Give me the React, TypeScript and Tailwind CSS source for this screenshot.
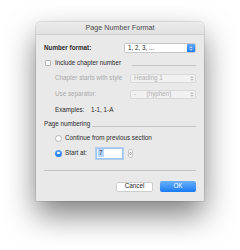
import React from 'react';

function Chevrons({ className }: { className?: string }) {
  return (
    <svg viewBox="0 0 6 10" className={className} fill="none" stroke="currentColor" strokeWidth="1.2" strokeLinecap="round" strokeLinejoin="round">
      <path d="M1.5 4 L3 2.3 L4.5 4" />
      <path d="M1.5 6 L3 7.7 L4.5 6" />
    </svg>
  );
}

function DisabledPopup({ label }: { label: React.ReactNode }) {
  return (
    <div className="ml-auto w-[66px] h-[9px] rounded-[2px] bg-[#f1f1f1] border border-[#d9d9d9] flex items-center pl-[3px] pr-[1px] text-[#b0b0b0]">
      <span className="flex-1 whitespace-pre">{label}</span>
      <Chevrons className="w-[4px] h-[7px] text-[#a0a0a0]" />
    </div>
  );
}

export default function App() {
  return (
    <div className="w-[240px] h-[250px] bg-white overflow-hidden pt-[22px] pl-[36px] [font-family:'Liberation_Sans',Arial,sans-serif] text-[6.3px] leading-none text-[#2a2a2a]">
      <div className="w-[168px] h-[179px] bg-[#e9e9e9] rounded-t-[4px] shadow-[0_14px_30px_rgba(0,0,0,0.5),0_0_0_0.5px_rgba(0,0,0,0.18)] flex flex-col">
        {/* title bar */}
        <div className="h-[13px] shrink-0 rounded-t-[4px] bg-gradient-to-b from-[#ececec] to-[#e1e1e1] border-b border-[#cfcfcf] flex items-center justify-center text-[7.2px] text-[#4a4a4a]">
          Page Number Format
        </div>

        <div className="flex flex-col px-[8px]">
          {/* number format */}
          <div className="mt-[8px] h-[10px] flex items-center">
            <span className="font-bold">Number format:</span>
            <div className="ml-auto w-[72px] h-[10px] rounded-[2px] bg-white border border-[#c8c8c8] flex items-center overflow-hidden">
              <span className="flex-1 pl-[3px] whitespace-pre">1, 2, 3, ...</span>
              <div className="w-[8px] h-full bg-gradient-to-b from-[#5fa8fa] to-[#1a78f2] flex items-center justify-center">
                <Chevrons className="w-[4px] h-[7px] text-white" />
              </div>
            </div>
          </div>

          {/* include chapter number */}
          <div className="mt-[5px] h-[10px] flex items-center">
            <div className="ml-[1px] w-[6px] h-[6px] rounded-[1px] bg-white border border-[#b5b5b5]" />
            <span className="ml-[4px]">Include chapter number</span>
            <div className="ml-auto mt-[5px] w-[64px] h-px bg-[#c6c6c6]" />
          </div>

          <div className="mt-[5px] h-[10px] flex items-center pl-[11px] text-[#a9a9a9]">
            <span>Chapter starts with style</span>
            <DisabledPopup label="Heading 1" />
          </div>

          <div className="mt-[6px] h-[10px] flex items-center pl-[11px] text-[#a9a9a9]">
            <span>Use separator:</span>
            <DisabledPopup label={'-      (hyphen)'} />
          </div>

          <div className="mt-[6px] h-[10px] flex items-center pl-[11px]">
            <span className="w-[36px]">Examples:</span>
            <span>1-1, 1-A</span>
          </div>

          {/* page numbering */}
          <div className="mt-[4px] h-[10px] flex items-center">
            <span>Page numbering</span>
            <div className="ml-[2px] mt-[4px] flex-1 h-px bg-[#c6c6c6]" />
          </div>

          <div className="mt-[4px] h-[10px] flex items-center pl-[11px]">
            <div className="w-[7px] h-[7px] rounded-full bg-white border border-[#b5b5b5]" />
            <span className="ml-[3px]">Continue from previous section</span>
          </div>

          <div className="mt-[4px] h-[12px] flex items-center pl-[11px]">
            <div className="w-[7px] h-[7px] rounded-full bg-gradient-to-b from-[#5aa6fa] to-[#1a76f0] flex items-center justify-center">
              <div className="w-[2.5px] h-[2.5px] rounded-full bg-white" />
            </div>
            <span className="ml-[3px] w-[31px]">Start at:</span>
            <div className="w-[27px] h-[11px] bg-white border border-[#9cc4f5] shadow-[0_0_0_1px_rgba(120,170,240,0.45)] flex items-center pl-[1px]">
              <span className="bg-[#b4d5fe] px-[1px] py-px">7</span>
            </div>
            <div className="ml-[5px] w-[5px] h-[9px] rounded-[2px] bg-[#f7f7f7] border border-[#c9c9c9] flex items-center justify-center">
              <Chevrons className="w-[4px] h-[7px] text-[#666666]" />
            </div>
          </div>

          <div className="mt-[11px] h-px bg-[#c2c2c2]" />

          {/* buttons */}
          <div className="mt-[10px] h-[11px] flex items-center justify-end gap-[7px]">
            <div className="w-[37px] h-[10px] rounded-[2px] bg-white border border-[#cdcdcd] flex items-center justify-center text-[#222222]">
              Cancel
            </div>
            <div className="w-[36px] h-[11px] rounded-[2px] bg-gradient-to-b from-[#68b0fb] to-[#137af3] flex items-center justify-center text-white">
              OK
            </div>
          </div>
        </div>
      </div>
    </div>
  );
}
